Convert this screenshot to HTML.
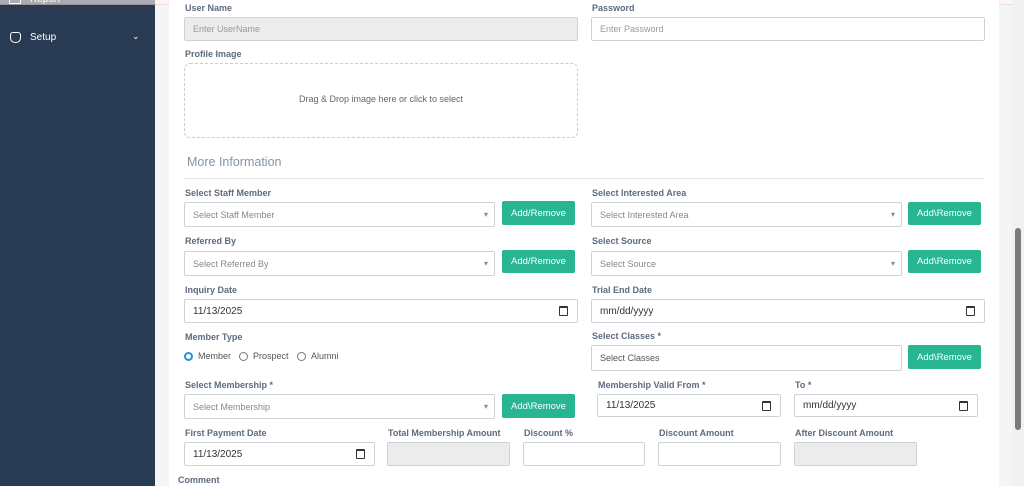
<!DOCTYPE html>
<html><head><style>
*{box-sizing:border-box;margin:0;padding:0}
body{width:1024px;height:486px;overflow:hidden;background:#f4f5f7;font-family:"Liberation Sans",sans-serif;position:relative}
.a{position:absolute}
.sb{left:0;top:0;width:155px;height:486px;background:#283b52}
.main{left:169px;top:0;width:830px;height:486px;background:#fff}
.lbl{position:absolute;font-size:9px;font-weight:bold;color:#5d6b7e}
.in{position:absolute;border:1px solid #cfd3d8;background:#fff;font-size:9px;color:#888;padding-left:8px;display:flex;align-items:center;border-radius:2px}
.gr{background:#ececec}
.sel::after{content:"▾";position:absolute;right:6px;font-size:8px;color:#888}
.btn{position:absolute;background:#27b592;color:#fff;font-size:9.5px;display:flex;align-items:center;justify-content:center;border-radius:2px;width:73px;height:23px}
.dt{color:#333;font-size:10px}
.dt::after{content:"";position:absolute;right:9px;width:7px;height:7px;border:1.3px solid #333;border-top-width:2.5px;border-radius:1px}
</style></head><body>
<div class="a sb"></div>
<div class="a" style="left:9px;top:-5px;width:12px;height:9px;border:1.5px solid #fff;border-radius:1px"></div>
<div class="a" style="left:30px;top:-6px;color:#fff;font-size:10px">Report</div>
<div class="a" style="left:0;top:0;width:1024px;height:5px;border-bottom:1px solid #f6c9b8;background:#fff8f5;opacity:.6"></div>
<div class="a" style="left:10px;top:32px;width:11px;height:11px;border:1.5px solid #fff;border-radius:3px 3px 5px 5px"></div>
<div class="a" style="left:30px;top:32px;color:#fff;font-size:10px">Setup</div>
<div class="a" style="left:132px;top:31px;color:#fff;font-size:9px">⌄</div>
<div class="a main"></div>
<div class="a" style="left:1012px;top:0;width:12px;height:486px;background:#f1f1f1"></div>
<div class="a" style="left:1015px;top:228px;width:6px;height:202px;background:#7a7a7a;border-radius:3px"></div>

<div class="lbl" style="left:185px;top:3px">User Name</div>
<div class="in gr" style="left:184px;top:17px;width:394px;height:24px;color:#999">Enter UserName</div>
<div class="lbl" style="left:592px;top:3px">Password</div>
<div class="in" style="left:591px;top:17px;width:394px;height:24px;color:#999">Enter Password</div>
<div class="lbl" style="left:185px;top:49px">Profile Image</div>
<div class="a" style="left:184px;top:63px;width:394px;height:75px;border:1px dashed #ccc;border-radius:6px;font-size:9px;color:#666;text-align:center;line-height:71px">Drag &amp; Drop image here or click to select</div>
<div class="a" style="left:187px;top:155px;font-size:12.5px;color:#8494a5">More Information</div>
<div class="a" style="left:184px;top:178px;width:801px;height:1px;background:#e6e6e6"></div>

<div class="lbl" style="left:185px;top:188px">Select Staff Member</div>
<div class="in sel" style="left:184px;top:202px;width:311px;height:25px">Select Staff Member</div>
<div class="btn" style="left:502px;top:201px;width:73px;height:24px">Add/Remove</div>
<div class="lbl" style="left:592px;top:188px">Select Interested Area</div>
<div class="in sel" style="left:591px;top:202px;width:311px;height:25px">Select Interested Area</div>
<div class="btn" style="left:908px;top:202px">Add\Remove</div>

<div class="lbl" style="left:185px;top:236px">Referred By</div>
<div class="in sel" style="left:184px;top:251px;width:311px;height:25px">Select Referred By</div>
<div class="btn" style="left:502px;top:250px">Add/Remove</div>
<div class="lbl" style="left:592px;top:236px">Select Source</div>
<div class="in sel" style="left:591px;top:251px;width:311px;height:25px">Select Source</div>
<div class="btn" style="left:908px;top:250px">Add\Remove</div>

<div class="lbl" style="left:185px;top:285px">Inquiry Date</div>
<div class="in dt" style="left:184px;top:299px;width:394px;height:24px">11/13/2025</div>
<div class="lbl" style="left:592px;top:285px">Trial End Date</div>
<div class="in dt" style="left:591px;top:299px;width:394px;height:24px">mm/dd/yyyy</div>

<div class="lbl" style="left:185px;top:332px">Member Type</div>
<div class="a" style="left:184px;top:352px;width:9px;height:9px;border-radius:50%;border:2.5px solid #2a8fd6"></div>
<div class="a" style="left:198px;top:351px;font-size:9px;color:#555">Member</div>
<div class="a" style="left:239px;top:352px;width:9px;height:9px;border-radius:50%;border:1px solid #777"></div>
<div class="a" style="left:253px;top:351px;font-size:9px;color:#555">Prospect</div>
<div class="a" style="left:297px;top:352px;width:9px;height:9px;border-radius:50%;border:1px solid #777"></div>
<div class="a" style="left:311px;top:351px;font-size:9px;color:#555">Alumni</div>
<div class="lbl" style="left:592px;top:331px">Select Classes *</div>
<div class="in" style="left:591px;top:345px;width:311px;height:26px;color:#555">Select Classes</div>
<div class="btn" style="left:908px;top:345px;width:73px;height:24px">Add\Remove</div>

<div class="lbl" style="left:185px;top:380px">Select Membership *</div>
<div class="in sel" style="left:184px;top:394px;width:311px;height:25px">Select Membership</div>
<div class="btn" style="left:502px;top:394px;width:73px;height:24px">Add\Remove</div>
<div class="lbl" style="left:598px;top:380px">Membership Valid From *</div>
<div class="in dt" style="left:597px;top:394px;width:184px;height:23px">11/13/2025</div>
<div class="lbl" style="left:795px;top:380px">To *</div>
<div class="in dt" style="left:794px;top:394px;width:184px;height:23px">mm/dd/yyyy</div>

<div class="lbl" style="left:185px;top:428px">First Payment Date</div>
<div class="in dt" style="left:184px;top:442px;width:191px;height:24px">11/13/2025</div>
<div class="lbl" style="left:388px;top:428px">Total Membership Amount</div>
<div class="in gr" style="left:387px;top:442px;width:123px;height:24px"></div>
<div class="lbl" style="left:524px;top:428px">Discount %</div>
<div class="in" style="left:523px;top:442px;width:122px;height:24px"></div>
<div class="lbl" style="left:659px;top:428px">Discount Amount</div>
<div class="in" style="left:658px;top:442px;width:123px;height:24px"></div>
<div class="lbl" style="left:795px;top:428px">After Discount Amount</div>
<div class="in gr" style="left:794px;top:442px;width:123px;height:24px"></div>
<div class="lbl" style="left:178px;top:475px">Comment</div>
</body></html>
